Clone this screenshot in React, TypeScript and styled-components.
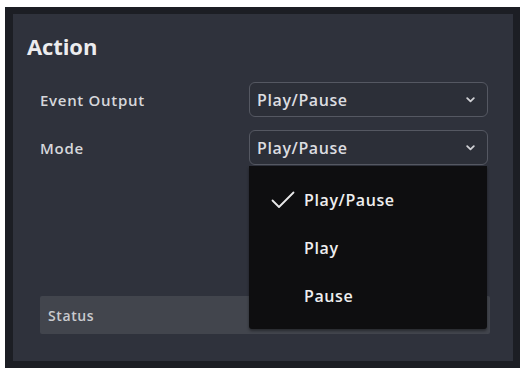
import React from "react";
import styled, { createGlobalStyle } from "styled-components";

const Global = createGlobalStyle`
  html, body { margin: 0; padding: 0; background: #ffffff; }
  body { font-family: "Open Sans", "DejaVu Sans", sans-serif; }
`;

const Frame = styled.div`
  margin: 7px 0 0 5px;
  width: 515px;
  height: 361px;
  box-sizing: border-box;
  background: #1c1e24;
  padding: 7px 7px 7px 8px;
`;

const Panel = styled.div`
  position: relative;
  height: 100%;
  background: #2f323c;
  box-sizing: border-box;
  padding: 18px 0 0 14px;
  display: flex;
  flex-direction: column;
`;

const Title = styled.div`
  font-size: 22px;
  line-height: 28px;
  font-weight: 700;
  color: #ececee;
  letter-spacing: -0.1px;
`;

const Form = styled.div`
  margin: 22px 0 0 13px;
  display: grid;
  grid-template-columns: 209px 239px;
  row-gap: 13px;
  align-items: center;
`;

const Label = styled.div`
  font-size: 15px;
  font-weight: 600;
  letter-spacing: 0.7px;
  color: #d6d7db;
`;

const SelectWrap = styled.div`
  position: relative;
`;

const Select = styled.div`
  height: 35px;
  box-sizing: border-box;
  border: 1.5px solid #555862;
  border-radius: 6px;
  background: #2c2f38;
  display: flex;
  align-items: center;
  justify-content: space-between;
  padding: 0 12px 0 7px;
  font-size: 16px;
  font-weight: 600;
  letter-spacing: 0.6px;
  color: #dcdde0;
`;

const Menu = styled.div`
  position: absolute;
  top: 36px;
  left: 0;
  width: 238px;
  height: 163px;
  background: #0e0e10;
  border-radius: 0 0 3px 3px;
  box-shadow: 0 2px 3px rgba(0, 0, 0, 0.4);
  z-index: 5;
  display: flex;
  flex-direction: column;
  padding-top: 10px;
  box-sizing: border-box;
`;

const Item = styled.div`
  height: 48px;
  display: flex;
  align-items: center;
  font-size: 16px;
  font-weight: 600;
  letter-spacing: 0.6px;
  color: #eeeeef;
`;

const CheckSlot = styled.div`
  width: 55px;
  display: flex;
  justify-content: flex-end;
  padding-right: 9px;
  box-sizing: border-box;
`;

const Status = styled.div`
  margin: auto 0 27px 13px;
  width: 450px;
  height: 38px;
  background: #42454d;
  border-radius: 2px;
  display: flex;
  align-items: center;
  padding-left: 8px;
  box-sizing: border-box;
  font-size: 14px;
  font-weight: 600;
  letter-spacing: 0.6px;
  color: #c9cace;
`;

const Chevron = () => (
  <svg width="9" height="6" viewBox="0 0 9 6">
    <path d="M1.2 1.2 L4.5 4.4 L7.8 1.2" fill="none" stroke="#d0d1d5" strokeWidth="1.8" strokeLinecap="round" strokeLinejoin="round" />
  </svg>
);

const Check = () => (
  <svg width="24" height="18" viewBox="0 0 24 18">
    <path d="M1.5 9.5 L8 16 L22.5 1.5" fill="none" stroke="#e8e8ea" strokeWidth="1.8" strokeLinecap="round" strokeLinejoin="round" />
  </svg>
);

const options = ["Play/Pause", "Play", "Pause"];

export default function App() {
  return (
    <>
      <Global />
      <Frame>
        <Panel>
          <Title>Action</Title>
          <Form>
            <Label>Event Output</Label>
            <Select>
              <span>Play/Pause</span>
              <Chevron />
            </Select>
            <Label>Mode</Label>
            <SelectWrap>
              <Select>
                <span>Play/Pause</span>
                <Chevron />
              </Select>
              <Menu>
                {options.map((o, i) => (
                  <Item key={o}>
                    <CheckSlot>{i === 0 ? <Check /> : null}</CheckSlot>
                    {o}
                  </Item>
                ))}
              </Menu>
            </SelectWrap>
          </Form>
          <Status>Status</Status>
        </Panel>
      </Frame>
    </>
  );
}
